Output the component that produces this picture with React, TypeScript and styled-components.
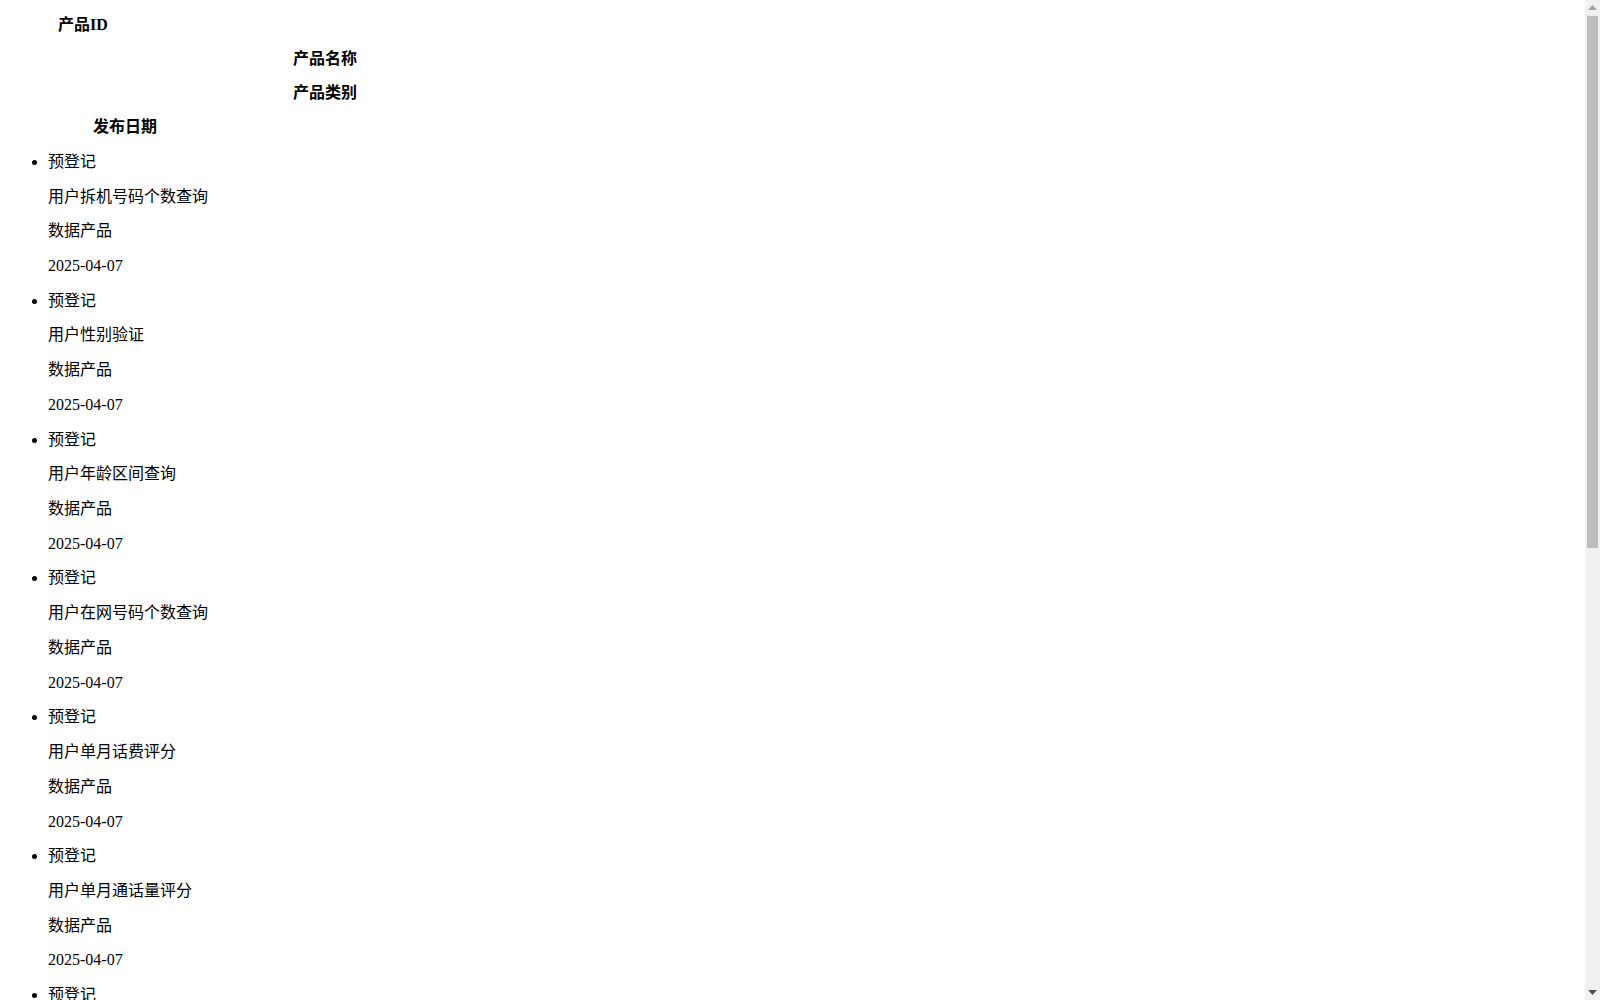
import React from "react";
import styled, { createGlobalStyle } from "styled-components";

const GlobalStyle = createGlobalStyle`
  html, body {
    margin: 0;
    padding: 0;
  }
  body {
    font-family: "Liberation Serif", "Noto Sans CJK SC", serif;
    font-size: 16px;
    line-height: 18.72px;
    color: #000;
    background: #fff;
  }
`;

const Page = styled.div`
  box-sizing: border-box;
  padding: 8px 8px 16px;
`;

const Header = styled.div`
  display: flex;
  flex-direction: column;
  gap: 15.33px;
  padding-top: 8px;
`;

const HeaderCell = styled.div<{ $indent: number }>`
  padding-left: ${(p) => p.$indent}px;
  font-weight: bold;
`;

const ProductList = styled.ul`
  margin: 16px 0 0;
  padding-left: 40px;
  list-style: disc;
`;

const ProductItem = styled.li`
  & + & {
    margin-top: 16px;
  }
`;

const Field = styled.div`
  & + & {
    margin-top: 16px;
  }
`;

/* Classic window scrollbar drawn over the right edge of the viewport */
const ScrollTrack = styled.div`
  position: fixed;
  top: 0;
  right: 0;
  width: 15px;
  height: 100vh;
  background: #f1f1f1;
  display: flex;
  flex-direction: column;
  align-items: center;
`;

const ScrollButton = styled.div`
  width: 15px;
  height: 15px;
  flex: none;
  display: flex;
  align-items: center;
  justify-content: center;
`;

const ScrollArea = styled.div`
  flex: 1;
  width: 100%;
  padding: 1px 2px;
  box-sizing: border-box;
`;

const ScrollThumb = styled.div`
  width: 100%;
  height: 532px;
  background: #bdbdbd;
`;

const names = [
  "用户拆机号码个数查询",
  "用户性别验证",
  "用户年龄区间查询",
  "用户在网号码个数查询",
  "用户单月话费评分",
  "用户单月通话量评分",
  "用户在网时长查询",
  "用户实名认证",
  "用户三要素验证",
  "用户二要素验证",
  "用户欠费状态查询",
  "用户停机状态查询",
  "用户月均消费评分",
  "用户流量使用评分",
  "用户号码状态查询",
  "用户常驻城市查询",
  "用户入网时间查询",
  "用户套餐档位查询",
  "用户终端品牌查询",
  "用户信用评分",
  "用户携号转网查询",
  "用户短信活跃度评分",
  "用户漫游次数查询",
  "用户宽带在网查询",
];

export default function App() {
  return (
    <Page>
      <GlobalStyle />
      <Header>
        <HeaderCell $indent={50}>产品ID</HeaderCell>
        <HeaderCell $indent={285}>产品名称</HeaderCell>
        <HeaderCell $indent={285}>产品类别</HeaderCell>
        <HeaderCell $indent={85}>发布日期</HeaderCell>
      </Header>
      <ProductList>
        {names.map((n, i) => (
          <ProductItem key={i}>
            <Field>预登记</Field>
            <Field>{n}</Field>
            <Field>数据产品</Field>
            <Field>2025-04-07</Field>
          </ProductItem>
        ))}
      </ProductList>
      <ScrollTrack aria-hidden="true">
        <ScrollButton>
          <svg width="9" height="5" viewBox="0 0 9 5">
            <polygon points="0,5 4.5,0 9,5" fill="#a3a3a3" />
          </svg>
        </ScrollButton>
        <ScrollArea>
          <ScrollThumb />
        </ScrollArea>
        <ScrollButton>
          <svg width="9" height="5" viewBox="0 0 9 5">
            <polygon points="0,0 9,0 4.5,5" fill="#505050" />
          </svg>
        </ScrollButton>
      </ScrollTrack>
    </Page>
  );
}
